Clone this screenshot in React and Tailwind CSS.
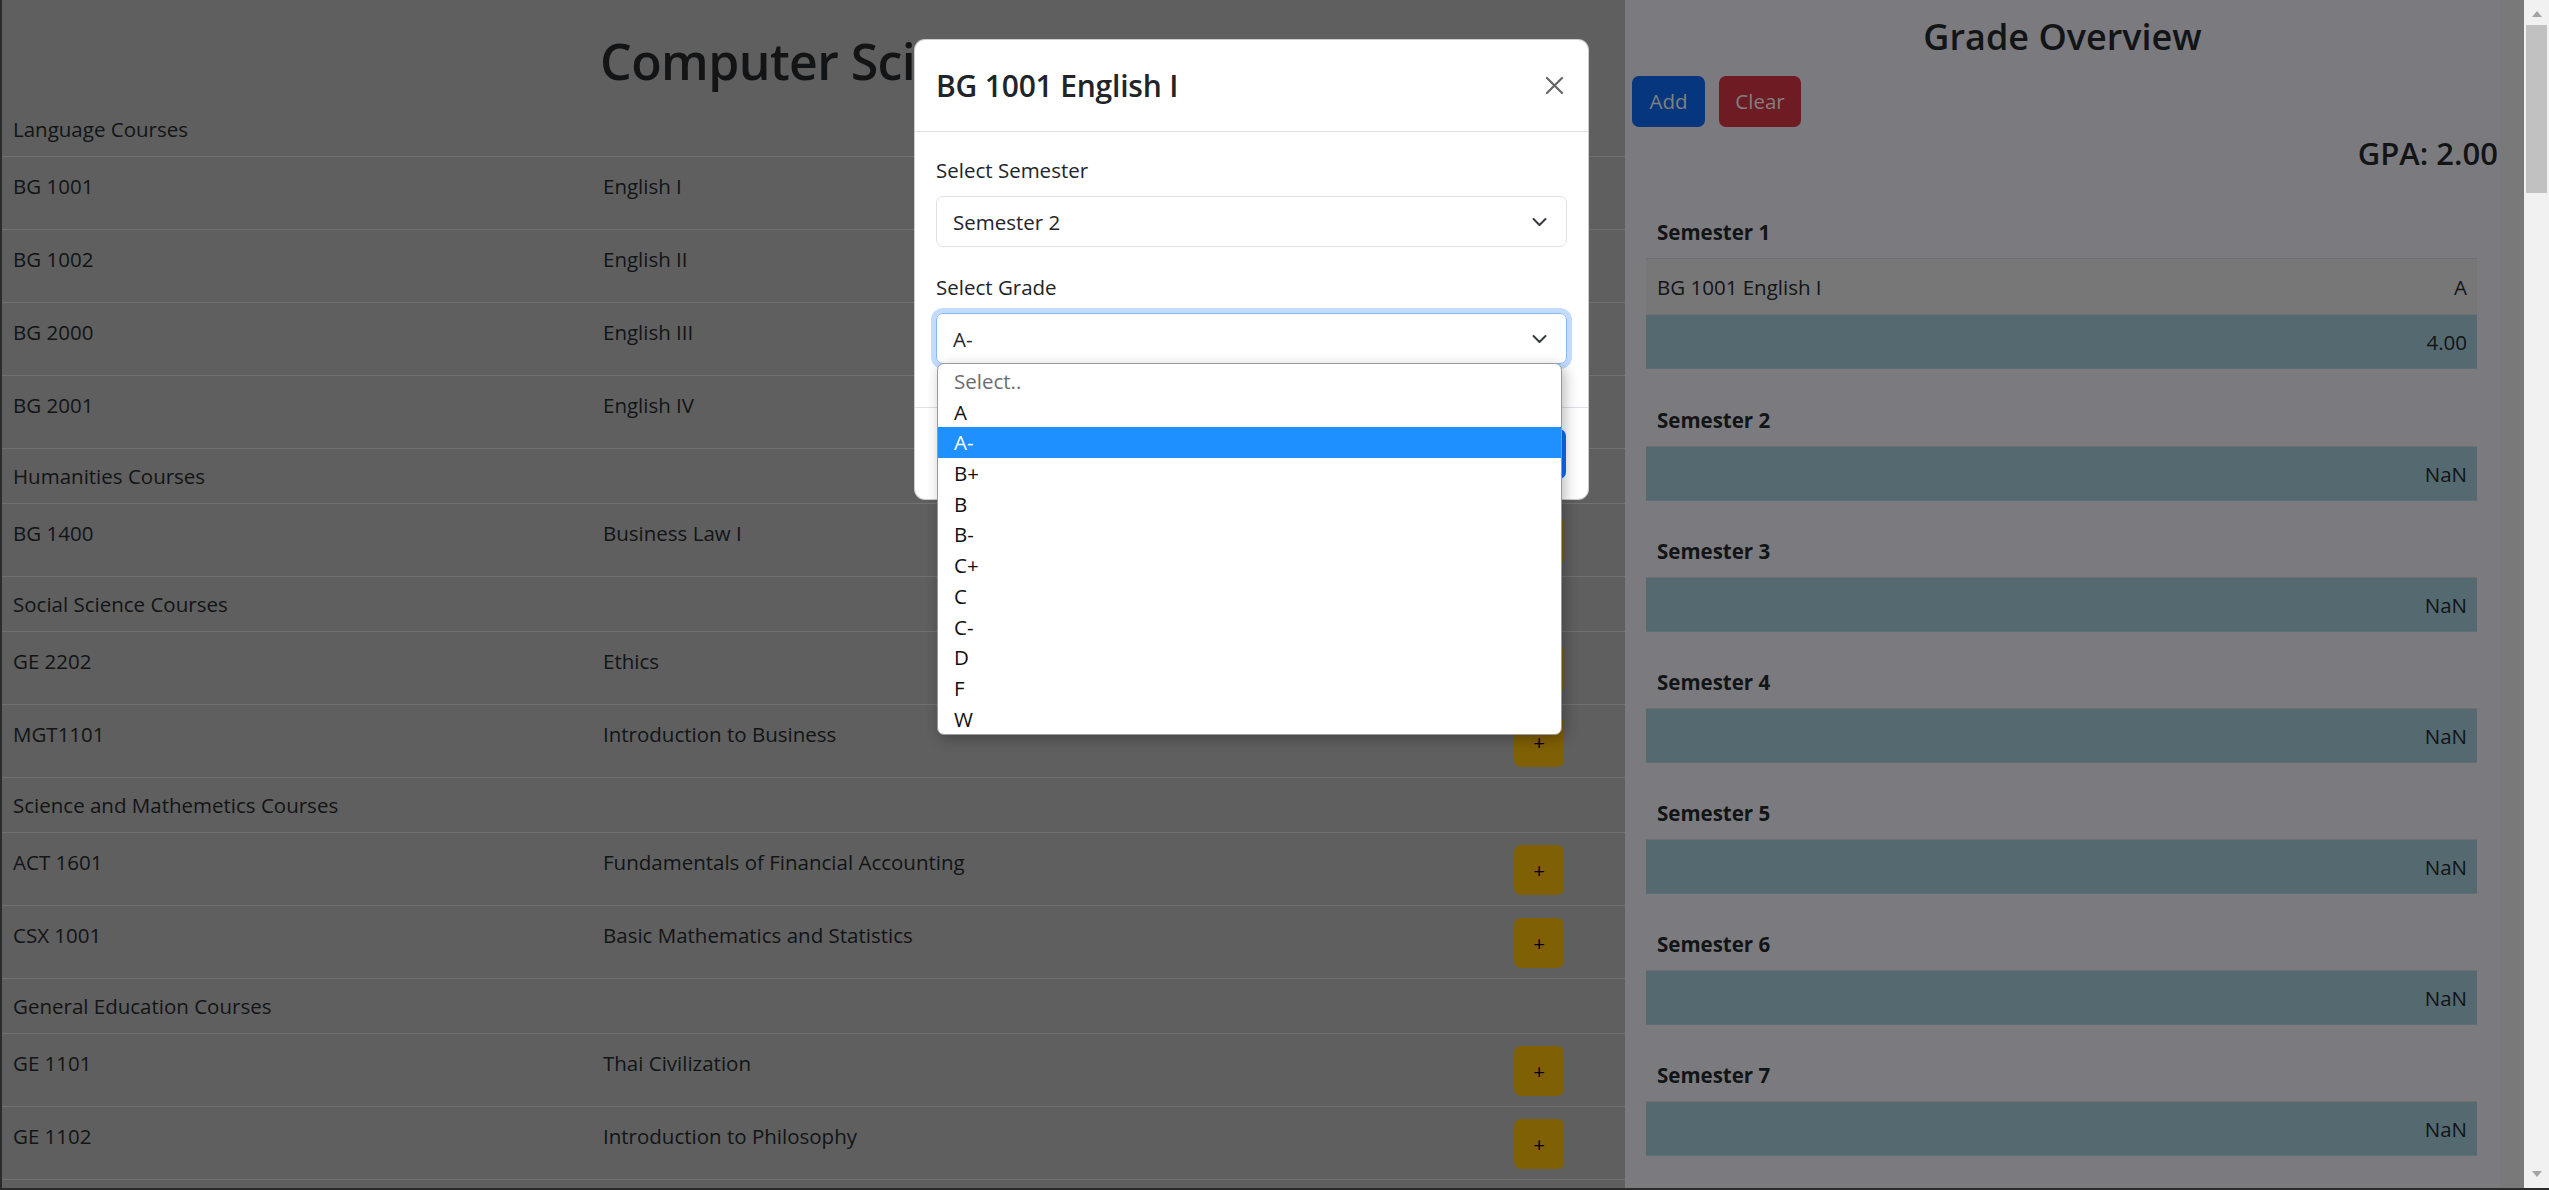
import React from "react";

const SECTIONS = [
	{ title: "Language Courses", courses: [["BG 1001", "English I"], ["BG 1002", "English II"], ["BG 2000", "English III"], ["BG 2001", "English IV"]] },
	{ title: "Humanities Courses", courses: [["BG 1400", "Business Law I"]] },
	{ title: "Social Science Courses", courses: [["GE 2202", "Ethics"], ["MGT1101", "Introduction to Business"]] },
	{ title: "Science and Mathemetics Courses", courses: [["ACT 1601", "Fundamentals of Financial Accounting"], ["CSX 1001", "Basic Mathematics and Statistics"]] },
	{ title: "General Education Courses", courses: [["GE 1101", "Thai Civilization"], ["GE 1102", "Introduction to Philosophy"]] },
];

const GRADES = ["Select..", "A", "A-", "B+", "B", "B-", "C+", "C", "C-", "D", "F", "W"];

function Chevron() {
	return (
		<svg width="21" height="16" viewBox="0 0 16 16" className="absolute right-[16px] top-1/2 -translate-y-1/2">
			<path d="m2 5 6 6 6-6" fill="none" stroke="#343a40" strokeWidth="2" strokeLinecap="round" strokeLinejoin="round" />
		</svg>
	);
}

function CourseTable() {
	return (
		<div className="text-[20.5px] leading-[32px] text-[#121416]">
			{SECTIONS.map((s) => (
				<div key={s.title}>
					<div className="h-[55px] flex items-center px-[11px] border-b border-[#6f7173]">{s.title}</div>
					{s.courses.map(([code, name]) => (
						<div key={code} className="h-[73px] grid grid-cols-[588px_911px_1fr] border-b border-[#6f7173]">
							<div className="pl-[11px] pt-[13px]">{code}</div>
							<div className="pl-[13px] pt-[13px]">{name}</div>
							<div className="pl-[13px] pt-[12px]">
								<div className="w-[50px] h-[50px] rounded-[7px] bg-[#806004] flex items-center justify-center text-black">+</div>
							</div>
						</div>
					))}
				</div>
			))}
		</div>
	);
}

function SemesterBlock({ n, rows, total, first }) {
	return (
		<div className={first ? "mb-[24px]" : "mb-[23px]"}>
			<div className="h-[54px] flex items-center px-[11px] font-bold border-b border-[#6f6e73]">Semester {n}</div>
			{rows.map(([course, grade]) => (
				<div key={course} className="h-[56px] flex items-center justify-between px-[11px] pr-[10px] bg-[#777778] border-b border-[#707070]">
					<span>{course}</span>
					<span>{grade}</span>
				</div>
			))}
			<div className="h-[54px] flex items-center justify-end pr-[10px] bg-[#546970] border-b border-[#5c6f76]">{total}</div>
		</div>
	);
}

function GradePanel() {
	return (
		<div className="w-[875px] shrink-0 bg-[#7b7a7f] text-[#121416]">
			<h3 className="pt-[14px] text-center text-[36px] leading-[45px] font-semibold">Grade Overview</h3>
			<div className="mt-[17px] pl-[7px] flex gap-[14px] text-[20.5px]">
				<button className="h-[51px] w-[73px] rounded-[7px] bg-[#06377e] text-[#808080]">Add</button>
				<button className="h-[51px] w-[82px] rounded-[7px] bg-[#6e1b23] text-[#808080]">Clear</button>
			</div>
			<h4 className="mt-[7px] pr-[2px] text-right text-[31px] leading-[38px] font-semibold">GPA: 2.00</h4>
			<div className="mt-[33px] mx-[23px] ml-[21px] text-[20.5px] leading-[32px]">
				<SemesterBlock n={1} first rows={[["BG 1001 English I", "A"]]} total="4.00" />
				{[2, 3, 4, 5, 6, 7].map((n) => (
					<SemesterBlock key={n} n={n} rows={[]} total="NaN" />
				))}
			</div>
		</div>
	);
}

function Scrollbar() {
	return (
		<div className="w-[25px] shrink-0 bg-[#f1f1f1] relative">
			<div className="absolute left-[8px] top-[11px] w-0 h-0 border-l-[5px] border-r-[5px] border-b-[6px] border-l-transparent border-r-transparent border-b-[#a3a3a3]" />
			<div className="absolute left-[2px] top-[25px] w-[21px] h-[168px] bg-[#c1c1c1]" />
			<div className="absolute left-[8px] bottom-[11px] w-0 h-0 border-l-[5px] border-r-[5px] border-t-[6px] border-l-transparent border-r-transparent border-t-[#a3a3a3]" />
		</div>
	);
}

function GradeModal() {
	return (
		<div className="absolute left-[912px] top-[39px] w-[675px] h-[461px] bg-white rounded-[11px] border border-black/20 text-[#212529]">
			<div className="h-[92px] flex items-center justify-between pl-[21px] pr-[22px] border-b border-[#dee2e6]">
				<h5 className="text-[30px] leading-[48px] font-semibold tracking-[-0.2px]">BG 1001 English I</h5>
				<svg width="23" height="23" viewBox="0 0 16 16" className="opacity-60">
					<path d="M.293.293a1 1 0 0 1 1.414 0L8 6.586 14.293.293a1 1 0 1 1 1.414 1.414L9.414 8l6.293 6.293a1 1 0 0 1-1.414 1.414L8 9.414l-6.293 6.293a1 1 0 0 1-1.414-1.414L6.586 8 .293 1.707a1 1 0 0 1 0-1.414z" fill="#000" transform="translate(2 2) scale(0.75)" />
				</svg>
			</div>
			<div className="px-[21px] pt-[22px] pb-[43px] text-[20.5px] leading-[32px]">
				<div className="mb-[10px]">Select Semester</div>
				<div className="relative h-[51px] rounded-[7px] border border-[#dee2e6] flex items-center pl-[16px]">
					Semester 2
					<Chevron />
				</div>
				<div className="mt-[24px] mb-[10px]">Select Grade</div>
				<div className="relative h-[51px] rounded-[7px] border border-[#86b7fe] shadow-[0_0_0_5px_#c2dbfe] flex items-center pl-[16px]">
					A-
					<Chevron />
				</div>
			</div>
			<div className="h-[92px] border-t border-[#dee2e6] flex items-center justify-end pr-[22px] gap-[11px] text-[20.5px]">
				<button className="h-[50px] px-[17px] rounded-[7px] bg-[#6c757d] text-white">Close</button>
				<button className="h-[50px] px-[17px] rounded-[7px] bg-[#0d6efd] text-white">Save Grade</button>
			</div>
		</div>
	);
}

function GradeDropdown() {
	return (
		<div className="absolute left-[935px] top-[363px] w-[625px] h-[372px] bg-white border border-[#9a9a9a] rounded-[7px] overflow-hidden pt-[2px] shadow-[3px_4px_14px_rgba(0,0,0,0.28)] text-[20.5px]">
			{GRADES.map((g, i) => (
				<div key={g} className={"h-[30.7px] leading-[30.7px] pl-[16px] " + (i === 2 ? "bg-[#1e90ff] text-white" : i === 0 ? "text-[#6d6d6d]" : "text-[#111]")}>
					{g}
				</div>
			))}
		</div>
	);
}

export default function App() {
	return (
		<div className="relative w-[2549px] h-[1190px] overflow-hidden bg-[#5f5f5f] border-l-2 border-b-2 border-[#2b2b2b] font-['Open_Sans','Noto_Sans',sans-serif]">
			<div className="flex h-full">
				<div className="w-[1623px] shrink-0 text-[#121416]">
					<h1 className="pt-[30px] pb-[9px] text-center text-[50px] leading-[63px] font-semibold tracking-[-0.6px]">Computer Science</h1>
					<CourseTable />
				</div>
				<GradePanel />
				<div className="w-[24px] shrink-0 bg-[#79797a]" />
				<Scrollbar />
			</div>
			<GradeModal />
			<GradeDropdown />
		</div>
	);
}
